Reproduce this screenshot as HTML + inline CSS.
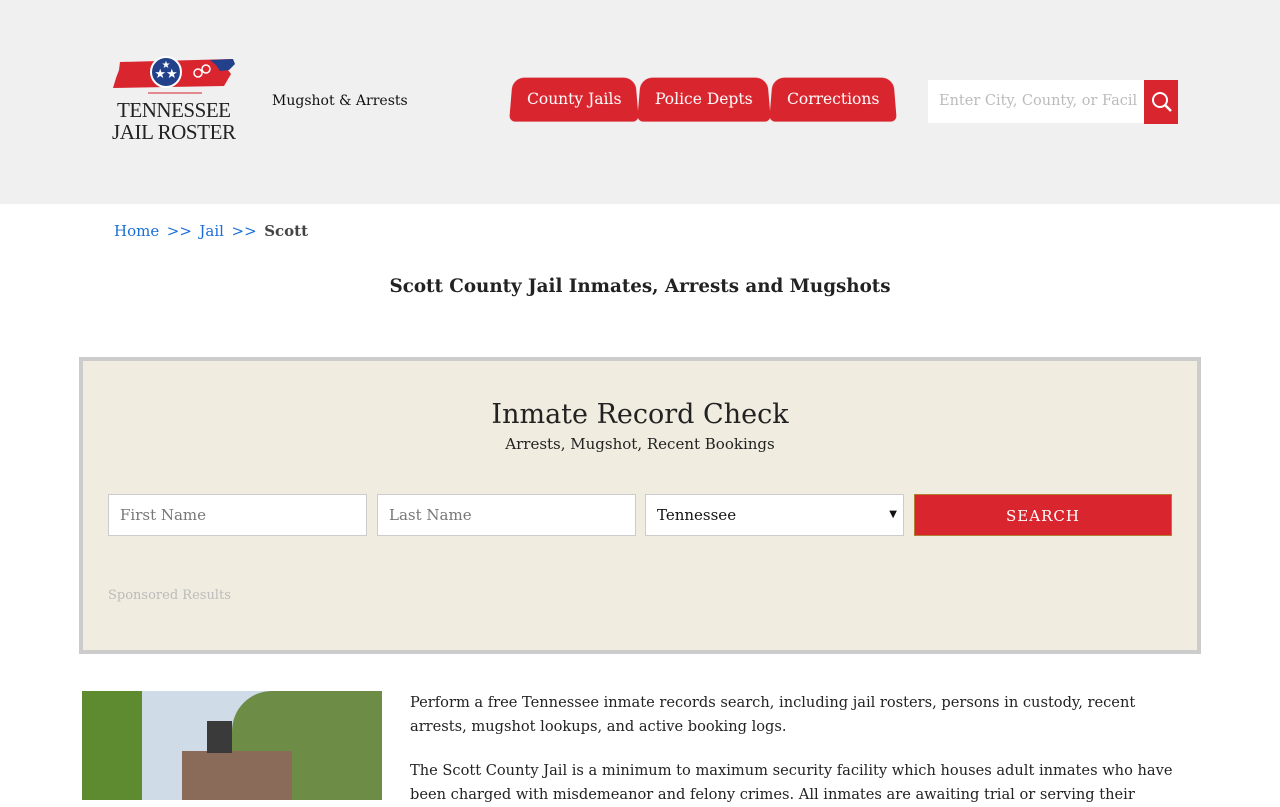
<!DOCTYPE html>
<html><head><meta charset="utf-8"><style>
*{box-sizing:border-box;margin:0;padding:0}
body{width:1280px;height:800px;overflow:hidden;background:#fff;font-family:"DejaVu Serif","Liberation Serif",serif;color:#222}
.hdr{height:204px;background:#f0f0f0;position:relative}
.logo{position:absolute;left:110px;top:56px;width:130px}
.tag{position:absolute;left:272px;top:93px;font-size:14px;color:#111}
.nav{position:absolute;left:511px;top:77px;display:flex}
.nav div{background:#d9252e;color:#fff;font-size:15.5px;height:44px;line-height:44px;padding:0 16px;border-radius:12px 12px 6px 6px;margin-right:2px;transform:perspective(40px) rotateX(3deg)}
.srch{position:absolute;left:928px;top:80px;width:216px;height:43px;background:#fff;color:#bbb;font-size:14.5px;line-height:43px;padding-left:11px;white-space:nowrap;overflow:hidden}
.sbtn{position:absolute;left:1144px;top:80px;width:34px;height:44px;background:#d9252e}
.bc{position:absolute;left:114px;top:222px;font-size:15px;color:#1a6fd6;word-spacing:-1px}
.bc b{color:#444;font-weight:bold}
h1{position:absolute;top:276px;width:100%;text-align:center;font-size:18.3px;font-weight:bold;color:#222}
.box{position:absolute;left:79px;top:357px;width:1122px;height:297px;border:4px solid #ccc;background:#f0ede0}
.box h2{position:absolute;top:38px;width:100%;text-align:center;font-weight:normal;font-size:27px;color:#222}
.box p.s{position:absolute;top:74px;width:100%;text-align:center;font-size:15px}
.f{position:absolute;top:133px;height:42px;width:259px;background:#fff;border:1px solid #ccc;font-size:15px;color:#777;line-height:40px;padding-left:11px}
.btn{position:absolute;left:831px;top:133px;width:258px;height:42px;background:#d9252e;border:1px solid #b08030;color:#fff;text-align:center;line-height:42px;font-size:15px;letter-spacing:1px}
.sp{position:absolute;left:25px;top:227px;font-size:13px;color:#bbb}
.img{position:absolute;left:82px;top:691px;width:300px;height:109px;overflow:hidden;background:#cfdce8}
.txt{position:absolute;left:410px;font-size:14.6px;line-height:24px;color:#222;width:800px;white-space:nowrap}
</style></head><body>
<div class="hdr">
<svg class="logo" viewBox="0 0 130 92" width="130" height="92">
<path d="M10 6 L122 3 L124 8 L118 14 L121 18 L114 30 L3 32 L6 22 L9 14 Z" fill="#d9252e"/>
<path d="M100 4 L123 3 L125 8 L119 14 L110 15 L106 9 Z" fill="#22418a"/>
<circle cx="56" cy="16" r="15" fill="#22418a" stroke="#fff" stroke-width="2"/>
<text x="56" y="22" font-size="13" fill="#fff" text-anchor="middle">★★</text>
<text x="56" y="12" font-size="10" fill="#fff" text-anchor="middle">★</text>
<circle cx="88" cy="17" r="4" fill="none" stroke="#fff" stroke-width="1.5"/><circle cx="96" cy="13" r="4" fill="none" stroke="#fff" stroke-width="1.5"/>
<line x1="38" y1="37" x2="92" y2="37" stroke="#d9252e"/>
<text x="64" y="61" font-size="21" text-anchor="middle" fill="#222" font-family="Liberation Serif" textLength="114">TENNESSEE</text>
<text x="64" y="83" font-size="21" text-anchor="middle" fill="#222" font-family="Liberation Serif" textLength="124">JAIL ROSTER</text>
</svg>
<div class="tag">Mugshot &amp; Arrests</div>
<div class="nav"><div>County Jails</div><div>Police Depts</div><div>Corrections</div></div>
<div class="srch">Enter City, County, or Facil</div>
<div class="sbtn"><svg width="34" height="44"><circle cx="16" cy="20" r="7" fill="none" stroke="#fff" stroke-width="2"/><line x1="21" y1="25" x2="27" y2="31" stroke="#fff" stroke-width="2.5"/></svg></div>
</div>
<div class="bc">Home &nbsp;&gt;&gt;&nbsp; Jail &nbsp;&gt;&gt;&nbsp; <b>Scott</b></div>
<h1>Scott County Jail Inmates, Arrests and Mugshots</h1>
<div class="box">
<h2>Inmate Record Check</h2>
<p class="s">Arrests, Mugshot, Recent Bookings</p>
<div class="f" style="left:25px">First Name</div>
<div class="f" style="left:294px">Last Name</div>
<div class="f" style="left:562px;color:#111">Tennessee<span style="position:absolute;right:6px;font-size:10px">▼</span></div>
<div class="btn">SEARCH</div>
<div class="sp">Sponsored Results</div>
</div>
<div class="img">
<div style="position:absolute;left:0;top:0;width:60px;height:109px;background:#5e8a30"></div>
<div style="position:absolute;left:150px;top:0;width:150px;height:109px;background:#6d8c45;border-radius:40px 0 0 0"></div>
<div style="position:absolute;left:100px;top:60px;width:110px;height:49px;background:#8a6a58"></div>
<div style="position:absolute;left:125px;top:30px;width:25px;height:32px;background:#3a3a3a"></div>
</div>
<div class="txt" style="top:691px">Perform a free Tennessee inmate records search, including jail rosters, persons in custody, recent<br>arrests, mugshot lookups, and active booking logs.</div>
<div class="txt" style="top:759px">The Scott County Jail is a minimum to maximum security facility which houses adult inmates who have<br>been charged with misdemeanor and felony crimes. All inmates are awaiting trial or serving their</div>
</body></html>
